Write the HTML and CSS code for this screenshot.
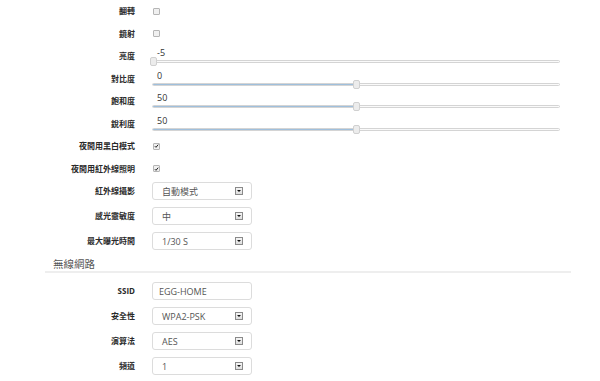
FILE: index.html
```html
<!DOCTYPE html>
<html>
<head>
    <meta charset="utf-8">
    <link rel="stylesheet" href="styles.css">
</head>
<body>
    <form class="settings">
        <div class="row">
            <label class="row-label">翻轉</label>
            <span class="check"></span>
        </div>
        <div class="row">
            <label class="row-label">鏡射</label>
            <span class="check"></span>
        </div>
        <div class="row">
            <label class="row-label">亮度</label>
            <div class="slider">
                <div class="slider-value">-5</div>
                <div class="track">
                    <div class="track-fill" style="width: 0%"></div>
                    <span class="thumb" style="left: 0%"></span>
                </div>
            </div>
        </div>
        <div class="row">
            <label class="row-label">對比度</label>
            <div class="slider">
                <div class="slider-value">0</div>
                <div class="track">
                    <div class="track-fill" style="width: 50%"></div>
                    <span class="thumb" style="left: 50%"></span>
                </div>
            </div>
        </div>
        <div class="row">
            <label class="row-label">飽和度</label>
            <div class="slider">
                <div class="slider-value">50</div>
                <div class="track">
                    <div class="track-fill" style="width: 50%"></div>
                    <span class="thumb" style="left: 50%"></span>
                </div>
            </div>
        </div>
        <div class="row">
            <label class="row-label">銳利度</label>
            <div class="slider">
                <div class="slider-value">50</div>
                <div class="track">
                    <div class="track-fill" style="width: 50%"></div>
                    <span class="thumb" style="left: 50%"></span>
                </div>
            </div>
        </div>
        <div class="row">
            <label class="row-label">夜間用黑白模式</label>
            <span class="check checked">
                <svg width="6" height="6" viewBox="0 0 6 6"><path d="M1 3.2 L2.4 4.6 L5 1.4" fill="none" stroke="#222" stroke-width="1.2"/></svg>
            </span>
        </div>
        <div class="row">
            <label class="row-label">夜間用紅外線照明</label>
            <span class="check checked">
                <svg width="6" height="6" viewBox="0 0 6 6"><path d="M1 3.2 L2.4 4.6 L5 1.4" fill="none" stroke="#222" stroke-width="1.2"/></svg>
            </span>
        </div>

        <div class="field-group">
            <div class="field">
                <label class="row-label">紅外線攝影</label>
                <div class="select-box"><span>自動模式</span><span class="arrow"></span></div>
            </div>
            <div class="field">
                <label class="row-label">感光靈敏度</label>
                <div class="select-box"><span>中</span><span class="arrow"></span></div>
            </div>
            <div class="field">
                <label class="row-label">最大曝光時間</label>
                <div class="select-box"><span>1/30 S</span><span class="arrow"></span></div>
            </div>
        </div>

        <h2 class="section-title">無線網路</h2>

        <div class="field-group">
            <div class="field">
                <label class="row-label">SSID</label>
                <div class="text-box">EGG-HOME</div>
            </div>
            <div class="field">
                <label class="row-label">安全性</label>
                <div class="select-box"><span>WPA2-PSK</span><span class="arrow"></span></div>
            </div>
            <div class="field">
                <label class="row-label">演算法</label>
                <div class="select-box"><span>AES</span><span class="arrow"></span></div>
            </div>
            <div class="field">
                <label class="row-label">頻道</label>
                <div class="select-box"><span>1</span><span class="arrow"></span></div>
            </div>
        </div>
    </form>
</body>
</html>
```

FILE: styles.css
```css
body {
    margin: 0;
    font-family: "Open Sans", "Noto Sans CJK TC", sans-serif;
    font-size: 8px;
    color: #333;
    background: #fff;
}

.settings {
    width: 600px;
}

.row {
    display: flex;
    align-items: center;
    gap: 17px;
    height: 22.5px;
}

.row-label {
    width: 135px;
    flex-shrink: 0;
    text-align: right;
    font-weight: bold;
    line-height: 10px;
    color: #2a2a2a;
}

.check {
    display: flex;
    align-items: center;
    justify-content: center;
    width: 5px;
    height: 5px;
    border: 1px solid #b5b5b5;
    border-radius: 1px;
    background: #f0f0f0;
    margin-left: 1px;
}

.check svg {
    display: block;
}

.slider {
    width: 408px;
    height: 22.5px;
    padding-top: 2px;
    box-sizing: border-box;
}

.slider-value {
    font-size: 9px;
    line-height: 11px;
    padding-left: 5px;
    color: #333;
}

.track {
    position: relative;
    margin-top: 2px;
    height: 1px;
    border: 1px solid #d4d4d4;
    border-radius: 2px;
    background: #fafafa;
}

.track-fill {
    height: 100%;
    background: #9fbfdc;
    border-radius: 2px 0 0 2px;
}

.thumb {
    position: absolute;
    top: -4px;
    width: 5px;
    height: 7px;
    margin-left: -3px;
    border: 1px solid #d0d0d0;
    border-radius: 2px;
    background: #ececec;
}

.field-group {
    padding-top: 2px;
}

.field {
    display: flex;
    align-items: center;
    gap: 17px;
    height: 18px;
    margin-bottom: 7px;
}

.select-box,
.text-box {
    display: flex;
    align-items: center;
    justify-content: space-between;
    width: 100px;
    height: 18px;
    box-sizing: border-box;
    border: 1px solid #dcdcdc;
    border-radius: 3px;
    padding: 0 8px 0 9px;
    color: #555;
    font-size: 9px;
}

.text-box {
    padding-left: 6px;
}

.arrow {
    position: relative;
    width: 8px;
    height: 8px;
    box-sizing: border-box;
    border: 1px solid #8a8a8a;
    background: linear-gradient(#f6f6f6, #dedede);
}

.arrow::after {
    content: "";
    position: absolute;
    left: 1px;
    top: 2px;
    border-left: 2px solid transparent;
    border-right: 2px solid transparent;
    border-top: 2px solid #111;
}

.section-title {
    margin: 0 29px 7px 45px;
    padding: 1px 0 0 8px;
    font-size: 10.5px;
    font-weight: normal;
    line-height: 13px;
    color: #555;
    border-bottom: 2px solid #eeeeee;
}
```
